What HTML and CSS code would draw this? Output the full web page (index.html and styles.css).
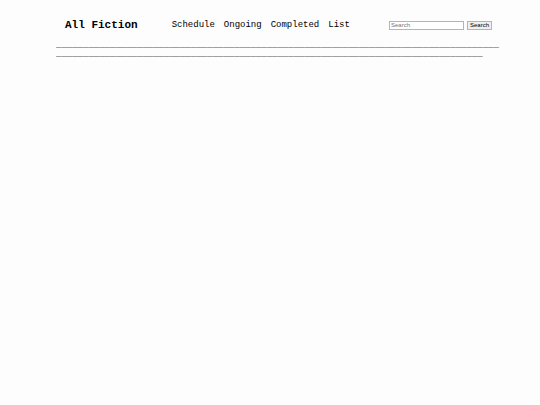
FILE: index.html
```
<!DOCTYPE html>
<html lang="en">
<head>
<meta charset="utf-8">
<title>All Fiction</title>
<link rel="stylesheet" href="styles.css">
</head>
<body>
<header class="header">
  <h1 class="brand">All Fiction</h1>
  <nav class="nav">
    <a href="#">Schedule</a>
    <a href="#">Ongoing</a>
    <a href="#">Completed</a>
    <a href="#">List</a>
  </nav>
  <form class="search">
    <input class="field" type="text" placeholder="Search" aria-label="Search">
    <button class="submit" type="button">Search</button>
  </form>
</header>
<main class="rule">—————————————————————————————————————————————————————————————————————————————————————————————————————————————————————————————————————————————————————————————————</main>
</body>
</html>
```
FILE: styles.css
```
* { box-sizing: border-box; }
body {
  margin: 0 37px 0 56px;
  background: #fdfdfd;
  color: #000;
  font-family: "Liberation Mono", monospace;
  font-size: 9px;
}
.header {
  display: flex;
  align-items: center;
  gap: 34px;
  padding: 17px 11px 11px 9px;
}
.brand { margin: 0; font-size: 11px; line-height: 16px; }
.nav { display: flex; gap: 9px; line-height: 12px; }
.nav a { color: inherit; text-decoration: none; }
.search { display: flex; align-items: center; gap: 3px; margin-left: auto; }
.field {
  width: 75px;
  height: 9px;
  padding: 0 1px;
  border: 1px solid #b4b4b4;
  background: #fff;
  font: 6px "Liberation Sans", sans-serif;
}
.field::placeholder { color: #757575; }
.submit {
  width: 25px;
  height: 9px;
  padding: 0;
  border: 1px solid #b4b4b4;
  background: #efefef;
  color: #000;
  font: 6px/7px "Liberation Sans", sans-serif;
}
.rule {
  color: #777;
  font-size: 9px;
  line-height: 9px;
  overflow-wrap: anywhere;
}
```
